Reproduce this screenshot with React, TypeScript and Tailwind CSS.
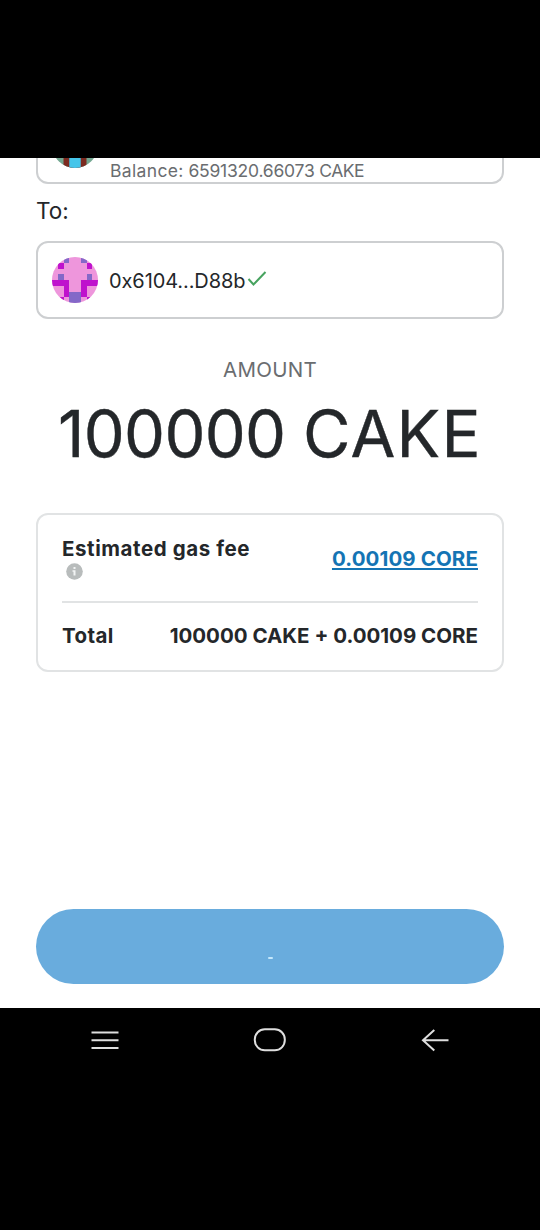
const IDENTICON = [
  '..b..b..',
  '.m....m.',
  '........',
  '.b....b.',
  'mmm..mmm',
  '..m..m..',
  '..mbbm..',
  '.m.bb.m.',
]

function RecipientAvatar() {
  return (
    <svg viewBox="0 0 8 8" className="size-[46px] shrink-0 rounded-full bg-[#ee96dc]" shapeRendering="crispEdges">
      {IDENTICON.map((row, y) =>
        row.split('').map((cell, x) =>
          cell === '.' ? null : (
            <rect key={`${x}-${y}`} x={x} y={y} width="1" height="1" fill={cell === 'm' ? '#bf12cd' : '#8468c8'} />
          ),
        ),
      )}
    </svg>
  )
}

function SenderAvatar() {
  return (
    <svg viewBox="0 0 46 46" className="size-[46px] shrink-0 rounded-full bg-[#74a892]">
      <path d="M11.500 34h23v12h-23z" fill="#7c2a20" />
      <path d="M17.250 34h11.500v12h-11.500z" fill="#45c5ea" />
    </svg>
  )
}

function NavigationBar() {
  return (
    <nav className="flex h-[222px] items-start justify-between bg-black px-[90px] pt-[18px] text-[#dedede]">
      <svg width="30" height="28" fill="none" stroke="currentColor" strokeWidth="2">
        <path d="M1.5 6.5h27M1.5 14.3h27M1.5 22h27" />
      </svg>
      <svg width="34" height="28" fill="none" stroke="currentColor" strokeWidth="2">
        <rect x="1.8" y="3.3" width="30" height="21" rx="10" />
      </svg>
      <svg width="30" height="28" fill="none" stroke="currentColor" strokeWidth="2">
        <path d="M28.500 14.300H3M14.300 4L3 14.300l11.300 10.200" />
      </svg>
    </nav>
  )
}

export default function App() {
  return (
    <div className="flex h-[1230px] w-[540px] flex-col overflow-hidden bg-white font-['Inter','Liberation_Sans',sans-serif] text-[#24272a]">
      <div className="h-[158px] shrink-0 bg-black" />

      <main className="flex h-[850px] shrink-0 flex-col px-9">
        <div className="flex h-[26px] shrink-0 items-end overflow-hidden rounded-b-xl border-2 border-t-0 border-[#cdcfd1] pl-[14px]">
          <div className="mb-[14px]">
            <SenderAvatar />
          </div>
          <p className="-mb-px ml-3 whitespace-nowrap text-[17.500px] leading-6 tracking-[-0.22px] text-[#6a6d70]">
            <span className="tracking-[0.35px]">Balance:</span> 6591320.66073 <span className="tracking-[-0.5px]">CAKE</span>
          </p>
        </div>

        <p className="mt-3 text-[22.500px] leading-[30px]">To:</p>

        <div className="mt-[15px] flex h-[78px] shrink-0 items-center rounded-xl border-2 border-[#cdcfd1] pl-[14px]">
          <RecipientAvatar />
          <p className="ml-[11px] mt-px text-[20px] leading-6 tracking-[-0.1px]">0x6104...D88b</p>
          <svg width="20" height="18" className="-mt-[3px] ml-[2px]" fill="none" stroke="#47a35f" strokeWidth="2">
            <path d="M1.500 9l5 5.500L18.500 2" />
          </svg>
        </div>

        <p className="mt-[39px] text-center text-[20.500px] leading-6 tracking-[0.3px] text-[#6a6d70]">AMOUNT</p>
        <p className="mt-[15px] whitespace-nowrap text-center text-[65px] leading-[74px] [-webkit-text-stroke:0.4px]">
          <span className="tracking-[-0.7px]">100000</span>
          <span className="-ml-[2px] tracking-[1.3px]"> CAKE</span>
        </p>

        <section className="mt-[42px] flex h-[159px] shrink-0 flex-col rounded-xl border-2 border-[#e1e3e4] px-6 text-[20.500px] font-bold">
          <div className="flex h-[86px] items-center justify-between">
            <div>
              <p className="leading-6 tracking-[0.58px]">Estimated gas fee</p>
              <svg width="17" height="17" viewBox="0 0 17 17" className="ml-1 mt-[2px]">
                <circle cx="8.500" cy="8.500" r="8.300" fill="#b8bcbc" />
                <path d="M7.500 4h2v2h-2zM6.500 7.200h3v5.300h-2V8.700h-1z" fill="#f2f4f4" />
              </svg>
            </div>
            <a className="mt-[2px] tracking-[0.1px] text-[#1474b4] underline decoration-2 underline-offset-2">0.00109 CORE</a>
          </div>
          <div className="flex grow items-center justify-between border-t-2 border-[#e1e3e4]">
            <span className="tracking-[0.4px]">Total</span>
            <span>100000 CAKE + 0.00109 CORE</span>
          </div>
        </section>

        <button className="mt-auto mb-6 flex h-[75px] shrink-0 items-center justify-center rounded-full bg-[#69acdd]">
          <span className="mt-[23px] h-[2px] w-[5px] rounded-full bg-[#c5e8fc]" />
        </button>
      </main>

      <NavigationBar />
    </div>
  )
}
